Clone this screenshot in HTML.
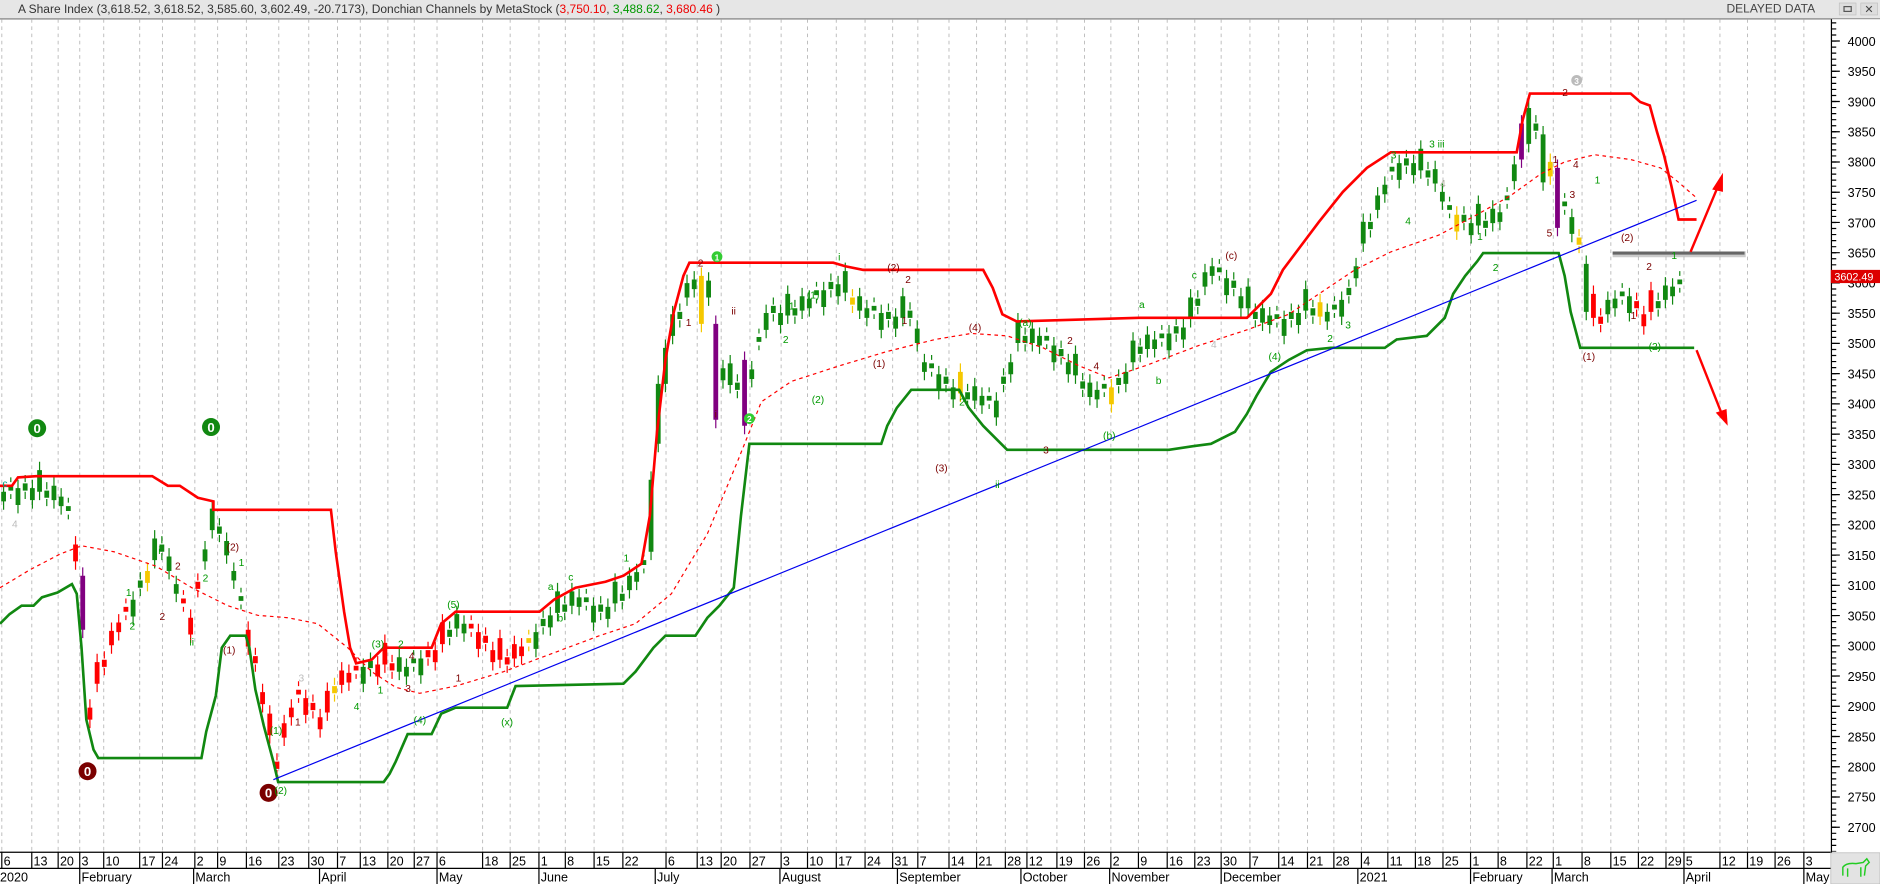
<!DOCTYPE html>
<html><head><meta charset="utf-8">
<style>
html,body{margin:0;padding:0;background:#fff;overflow:hidden}
svg{display:block}
text{font-family:"Liberation Sans",Arial,sans-serif}
</style></head>
<body>
<svg width="1880" height="884" viewBox="0 0 1568 737" preserveAspectRatio="none" xmlns="http://www.w3.org/2000/svg" xmlns:xlink="http://www.w3.org/1999/xlink">
<rect x="0" y="0" width="1568" height="737" fill="#fff"/>
<rect x="0" y="0" width="1568" height="15.5" fill="#e6e6e6"/>
<line x1="0" y1="15.8" x2="1568" y2="15.8" stroke="#777" stroke-width="1"/>
<text x="15" y="11" font-size="10" fill="#333">A Share Index (3,618.52, 3,618.52, 3,585.60, 3,602.49, -20.7173), Donchian Channels by MetaStock (<tspan fill="#e00">3,750.10</tspan>, <tspan fill="#090">3,488.62</tspan>, <tspan fill="#e00">3,680.46</tspan> )</text>
<text x="1440" y="10.5" font-size="10" fill="#444">DELAYED DATA</text>
<rect x="1534" y="2.5" width="14" height="10" fill="#ddd" stroke="#bbb" stroke-width="0.5"/>
<rect x="1538" y="5.5" width="6" height="4" fill="none" stroke="#555" stroke-width="1"/>
<rect x="1552" y="2.5" width="14" height="10" fill="#ddd" stroke="#bbb" stroke-width="0.5"/>
<text x="1555" y="11" font-size="9" fill="#444">✕</text>
<path fill="none" stroke="#bdbdbd" stroke-width="0.8" stroke-dasharray="3,3" d="M1.5 16V710M26.5 16V710M48.5 16V710M66.5 16V710M86.5 16V710M116.5 16V710M135.5 16V710M162.5 16V710M181.5 16V710M205.5 16V710M232.5 16V710M257.5 16V710M281.5 16V710M300.5 16V710M323.5 16V710M345.5 16V710M364.5 16V710M402.5 16V710M425.5 16V710M449.5 16V710M471.5 16V710M495.5 16V710M519.5 16V710M555.5 16V710M581.5 16V710M601.5 16V710M625.5 16V710M651.5 16V710M673.5 16V710M697.5 16V710M721.5 16V710M744.5 16V710M765.5 16V710M791.5 16V710M814.5 16V710M838.5 16V710M856.5 16V710M881.5 16V710M904.5 16V710M926.5 16V710M949.5 16V710M973.5 16V710M996.5 16V710M1018.5 16V710M1042.5 16V710M1066.5 16V710M1090.5 16V710M1112.5 16V710M1135.5 16V710M1157.5 16V710M1180.5 16V710M1203.5 16V710M1226.5 16V710M1249.5 16V710M1273.5 16V710M1295.5 16V710M1319.5 16V710M1343.5 16V710M1366.5 16V710M1389.5 16V710M1404.5 16V710M1434.5 16V710M1457.5 16V710M1480.5 16V710M1504.5 16V710"/>
<defs>
<path id="cg" d="M3 410v8M9 405v4M15 407v14M21 403v6M27 407v10M33 392v18M39 409v6M45 405v12M51 414v8M57 422v4M111 500v14M117 484v6M129 449v18M135 454v6M141 464v12M147 487v8M171 458v10M177 424v18M183 439v6M189 451v12M195 476v8M201 497v4M303 556v14M309 551v6M333 548v12M339 556v8M345 549v4M351 549v14M375 525v6M381 512v12M387 520v8M447 527v14M453 516v6M459 513v10M465 493v18M471 504v6M477 493v12M483 498v8M489 498v4M495 505v14M501 504v6M507 506v10M513 485v18M519 495v6M525 480v12M531 477v8M537 467v4M543 400v60M549 320v50M555 290v30M561 262v18M567 260v6M573 236v12M579 233v8M591 234v14M603 307v10M609 303v18M615 319v6M627 308v8M633 281v4M639 261v14M645 255v6M651 261v10M657 245v18M663 257v6M669 247v12M675 249v8M681 242v4M687 242v14M693 235v6M699 237v10M705 226v18M717 247v12M723 257v8M729 255v4M735 261v14M741 260v6M747 264v10M753 247v18M759 259v6M765 274v12M771 302v8M777 303v4M783 312v14M789 314v6M795 323v10M807 327v6M813 322v12M819 330v8M825 330v4M831 334v14M837 314v6M843 302v10M849 268v18M855 280v6M861 274v12M867 280v8M873 280v4M879 288v14M885 291v6M891 302v10M897 295v18M903 318v6M909 319v12M915 325v8M921 320v4M933 315v6M939 310v10M945 284v18M951 289v6M957 279v12M963 283v8M969 278v4M975 278v14M981 272v6M987 273v10M993 248v18M999 249v6M1005 227v12M1011 222v8M1017 223v4M1023 232v14M1029 234v6M1035 247v10M1041 239v18M1047 260v6M1053 257v12M1059 263v8M1065 262v4M1071 266v14M1077 260v6M1083 261v10M1089 241v18M1095 257v6M1107 260v8M1113 254v4M1119 250v14M1125 240v6M1131 222v10M1137 185v18M1143 185v6M1149 163v12M1155 154v8M1161 139v4M1167 136v14M1173 132v6M1179 136v10M1185 124v18M1191 142v6M1197 141v12M1203 160v8M1209 171v4M1221 179v6M1227 186v10M1233 170v18M1239 184v6M1245 174v12M1251 177v8M1257 163v4M1263 137v14M1275 90v30M1281 103v6M1287 112v40M1305 168v4M1311 181v14M1323 220v40M1341 250v12M1347 249v8M1353 243v4M1359 247v14M1383 251v6M1389 238v12M1395 239v8M1401 233v4"/>
<path id="cr" d="M63 454v14M75 590v10M81 552v18M87 550v6M93 526v12M99 519v8M105 506v4M153 499v4M159 515v14M165 485v6M207 525v14M213 547v6M219 577v10M225 595v18M231 635v6M237 603v12M243 590v8M249 575v4M255 582v14M261 586v6M267 598v10M273 576v18M285 559v12M291 561v8M297 555v4M315 554v10M321 536v18M327 553v6M357 542v6M363 542v10M369 519v18M393 520v4M399 527v14M405 530v6M411 542v10M417 532v18M423 548v6M429 537v12M435 539v8M1329 245v20M1335 264v6M1365 251v6M1371 262v10M1377 242v18"/>
<path id="cy" d="M123 476v10M279 572v6M441 532v4M585 230v40M711 248v6M801 310v18M927 323v14M1101 252v12M1215 179v14M1293 135v12M1317 198v6"/>
<path id="cp" d="M69 480v45M597 270v80M621 300v55M1269 103v30M1299 140v50"/>
</defs>
<g fill="none" stroke-width="1">
<g stroke="#118811"><use xlink:href="#cg" y="-7"/><use xlink:href="#cg" y="7"/></g>
<g stroke="#f00"><use xlink:href="#cr" y="-7"/><use xlink:href="#cr" y="7"/></g>
<g stroke="#f5c800"><use xlink:href="#cy" y="-7"/><use xlink:href="#cy" y="7"/></g>
<g stroke="#800080"><use xlink:href="#cp" y="-7"/><use xlink:href="#cp" y="7"/></g>
</g>
<g fill="none" stroke-width="4">
<use xlink:href="#cg" stroke="#118811"/>
<use xlink:href="#cr" stroke="#f00"/>
<use xlink:href="#cy" stroke="#f5c800"/>
<use xlink:href="#cp" stroke="#800080"/>
</g>
<polyline fill="none" stroke="#f00" stroke-width="2.2" points="0,405 10,405 15,398 30,397 45,397 127,397 140,405 150,405 165,415 178,418 178,425 276,425 280,460 287,510 292,540 297,553 310,550 320,540 360,540 368,520 380,510 450,510 462,500 480,490 505,485 520,480 535,470 542,430 548,360 555,300 562,260 570,230 575,219 695,219 705,222 720,225 820,225 828,240 836,262 848,268 950,265 1040,265 1060,245 1070,225 1085,205 1100,185 1120,160 1140,140 1160,127 1265,127 1270,100 1276,78 1360,78 1368,85 1376,88 1382,110 1388,130 1394,155 1400,183 1415,183"/>
<polyline fill="none" stroke="#118811" stroke-width="2.2" points="0,520 8,512 18,505 28,505 35,498 48,494 60,487 64,495 68,540 72,600 78,625 82,632 168,632 172,610 180,580 185,540 192,530 205,530 208,540 213,575 220,605 228,635 232,652 320,652 325,645 330,635 340,612 360,612 368,595 380,590 423,590 430,572 520,570 530,560 545,540 555,530 580,530 590,515 600,505 612,490 618,430 625,370 735,370 740,355 748,340 760,325 800,325 808,340 820,355 835,370 840,375 975,375 995,372 1010,370 1030,360 1040,345 1048,330 1060,310 1075,300 1090,292 1110,290 1155,290 1165,283 1190,280 1205,265 1212,245 1222,230 1232,218 1237,211 1300,211 1305,230 1310,260 1318,290 1413,290"/>
<polyline fill="none" stroke="#f00" stroke-width="1" stroke-dasharray="3,3" points="0,490 25,475 50,462 68,455 95,460 130,472 160,490 190,505 215,513 240,515 265,520 290,540 310,560 330,573 350,578 380,572 420,560 460,545 500,530 530,520 560,495 590,445 615,385 635,335 660,318 700,305 740,293 780,283 810,278 840,280 870,290 900,305 925,315 955,305 1000,288 1040,275 1075,262 1100,245 1130,225 1160,210 1200,196 1230,180 1260,163 1285,145 1305,135 1330,129 1360,133 1385,140 1400,152 1415,165"/>
<line x1="228" y1="650" x2="1415" y2="167" stroke="#0000ee" stroke-width="1"/>
<line x1="1345" y1="212" x2="1456" y2="212" stroke="#aaa" stroke-width="5" opacity="0.6"/>
<line x1="1345" y1="211" x2="1455" y2="211" stroke="#666" stroke-width="2.5"/>
<g stroke="#f00" stroke-width="2" fill="#f00">
<line x1="1410" y1="210" x2="1433" y2="155"/>
<polygon points="1437,144 1428,158 1437,160" stroke="none"/>
<line x1="1415" y1="292" x2="1436" y2="345"/>
<polygon points="1441,355 1431,344 1440,341" stroke="none"/>
</g>
<g font-size="11" font-weight="bold" text-anchor="middle" fill="#fff">
<circle cx="31" cy="357" r="7.5" fill="#118811"/><text x="31" y="361">0</text>
<circle cx="176" cy="356" r="7.5" fill="#118811"/><text x="176" y="360">0</text>
<circle cx="73" cy="643" r="7.5" fill="#7a0000"/><text x="73" y="647">0</text>
<circle cx="224" cy="661" r="7.5" fill="#7a0000"/><text x="224" y="665">0</text>
<circle cx="598" cy="214" r="4.5" fill="#3c3"/><text x="598" y="217" font-size="7">1</text>
<circle cx="625" cy="349" r="4.5" fill="#3c3"/><text x="625" y="352" font-size="7">2</text>
<circle cx="1315" cy="67" r="4.5" fill="#bbb"/><text x="1315" y="70" font-size="7">3</text>
</g>
<g font-size="8.5">
<text x="2" y="406" fill="#0a8">c</text><text x="10" y="440" fill="#bbb">4</text>
<text x="133" y="517" fill="#7a0000">2</text><text x="158" y="538" fill="#090">ii</text>
<text x="132" y="462" fill="#090">i</text><text x="146" y="475" fill="#7a0000">2</text>
<text x="105" y="497" fill="#090">1</text><text x="108" y="525" fill="#090">2</text>
<text x="186" y="545" fill="#7a0000">(1)</text><text x="189" y="459" fill="#7a0000">(2)</text>
<text x="169" y="485" fill="#090">2</text><text x="199" y="472" fill="#090">1</text>
<text x="225" y="612" fill="#090">(1)</text><text x="229" y="662" fill="#090">(2)</text>
<text x="249" y="568" fill="#bbb">3</text><text x="246" y="605" fill="#7a0000">1</text>
<text x="310" y="540" fill="#090">(3)</text><text x="315" y="578" fill="#090">1</text>
<text x="332" y="540" fill="#090">2</text><text x="341" y="550" fill="#7a0000">4</text>
<text x="338" y="577" fill="#7a0000">3</text><text x="345" y="603" fill="#090">(4)</text>
<text x="373" y="507" fill="#090">(5)</text><text x="380" y="568" fill="#7a0000">1</text>
<text x="418" y="605" fill="#090">(x)</text><text x="295" y="592" fill="#090">4</text>
<text x="457" y="492" fill="#090">a</text><text x="465" y="518" fill="#090">b</text>
<text x="474" y="484" fill="#090">c</text><text x="520" y="468" fill="#090">1</text>
<text x="582" y="222" fill="#7a0000">2</text><text x="572" y="272" fill="#7a0000">1</text>
<text x="610" y="262" fill="#7a0000">ii</text><text x="596" y="348" fill="#7a0000">i</text>
<text x="653" y="286" fill="#090">2</text><text x="658" y="258" fill="#090">1</text>
<text x="673" y="249" fill="#090">(1)</text><text x="677" y="336" fill="#090">(2)</text>
<text x="699" y="217" fill="#090">i</text><text x="740" y="226" fill="#7a0000">(2)</text>
<text x="755" y="236" fill="#7a0000">2</text><text x="728" y="306" fill="#7a0000">(1)</text>
<text x="752" y="270" fill="#7a0000">1</text><text x="808" y="276" fill="#7a0000">(4)</text>
<text x="780" y="393" fill="#7a0000">(3)</text><text x="800" y="338" fill="#090">2</text>
<text x="830" y="407" fill="#090">ii</text><text x="850" y="272" fill="#090">(a)</text>
<text x="890" y="287" fill="#7a0000">2</text><text x="870" y="378" fill="#7a0000">3</text>
<text x="912" y="308" fill="#7a0000">4</text><text x="920" y="366" fill="#090">(b)</text>
<text x="950" y="257" fill="#090">a</text><text x="964" y="320" fill="#090">b</text>
<text x="994" y="232" fill="#090">c</text><text x="1022" y="216" fill="#7a0000">(c)</text>
<text x="1010" y="290" fill="#bbb">4</text><text x="1058" y="300" fill="#090">(4)</text>
<text x="1087" y="258" fill="#090">1</text><text x="1107" y="285" fill="#090">2</text>
<text x="1122" y="274" fill="#090">3</text><text x="1160" y="132" fill="#090">3</text>
<text x="1172" y="187" fill="#090">4</text><text x="1192" y="123" fill="#090">3 iii</text>
<text x="1201" y="156" fill="#aa9">4</text><text x="1232" y="200" fill="#090">1</text>
<text x="1245" y="226" fill="#090">2</text><text x="1295" y="136" fill="#7a0000">1</text>
<text x="1309" y="165" fill="#7a0000">3</text><text x="1312" y="140" fill="#7a0000">4</text>
<text x="1303" y="80" fill="#7a0000">2</text><text x="1290" y="197" fill="#7a0000">5</text>
<text x="1330" y="153" fill="#090">1</text><text x="1352" y="201" fill="#7a0000">(2)</text>
<text x="1320" y="300" fill="#7a0000">(1)</text><text x="1375" y="292" fill="#090">(2)</text>
<text x="1360" y="266" fill="#7a0000">1</text><text x="1373" y="225" fill="#7a0000">2</text>
<text x="1394" y="216" fill="#090">1</text>
</g>
<rect x="1528" y="16" width="40" height="695" fill="#fff"/>
<line x1="1527.5" y1="16" x2="1527.5" y2="712" stroke="#000" stroke-width="1"/>
<line x1="1529.5" y1="18.6" x2="1529.5" y2="710" stroke="#000" stroke-width="4" stroke-dasharray="1 4.042"/>
<line x1="1531" y1="33.7" x2="1531" y2="700" stroke="#000" stroke-width="7" stroke-dasharray="1 24.21"/>
<g font-size="10.5" fill="#000">
<text x="1541" y="38.2">4000</text><text x="1541" y="63.4">3950</text><text x="1541" y="88.6">3900</text><text x="1541" y="113.8">3850</text><text x="1541" y="139">3800</text><text x="1541" y="164.3">3750</text><text x="1541" y="189.5">3700</text><text x="1541" y="214.7">3650</text><text x="1541" y="239.9">3600</text><text x="1541" y="265.1">3550</text><text x="1541" y="290.3">3500</text><text x="1541" y="315.5">3450</text><text x="1541" y="340.7">3400</text><text x="1541" y="365.9">3350</text><text x="1541" y="391.1">3300</text><text x="1541" y="416.3">3250</text><text x="1541" y="441.6">3200</text><text x="1541" y="466.8">3150</text><text x="1541" y="492">3100</text><text x="1541" y="517.2">3050</text><text x="1541" y="542.4">3000</text><text x="1541" y="567.6">2950</text><text x="1541" y="592.8">2900</text><text x="1541" y="618">2850</text><text x="1541" y="643.2">2800</text><text x="1541" y="668.4">2750</text><text x="1541" y="693.7">2700</text>
</g>
<rect x="1527" y="225" width="41" height="11" fill="#d00"/>
<text x="1530" y="234" font-size="9" fill="#fff">3602.49</text>
<rect x="0" y="710" width="1527" height="27" fill="#fff"/>
<line x1="0" y1="710.5" x2="1527" y2="710.5" stroke="#000"/>
<line x1="0" y1="724" x2="1527" y2="724" stroke="#000"/>
<path stroke="#000" stroke-width="1" d="M1.5 710V724M26.5 710V724M48.5 710V724M66.5 710V724M86.5 710V724M116.5 710V724M135.5 710V724M162.5 710V724M181.5 710V724M205.5 710V724M232.5 710V724M257.5 710V724M281.5 710V724M300.5 710V724M323.5 710V724M345.5 710V724M364.5 710V724M402.5 710V724M425.5 710V724M449.5 710V724M471.5 710V724M495.5 710V724M519.5 710V724M555.5 710V724M581.5 710V724M601.5 710V724M625.5 710V724M651.5 710V724M673.5 710V724M697.5 710V724M721.5 710V724M744.5 710V724M765.5 710V724M791.5 710V724M814.5 710V724M838.5 710V724M856.5 710V724M881.5 710V724M904.5 710V724M926.5 710V724M949.5 710V724M973.5 710V724M996.5 710V724M1018.5 710V724M1042.5 710V724M1066.5 710V724M1090.5 710V724M1112.5 710V724M1135.5 710V724M1157.5 710V724M1180.5 710V724M1203.5 710V724M1226.5 710V724M1249.5 710V724M1273.5 710V724M1295.5 710V724M1319.5 710V724M1343.5 710V724M1366.5 710V724M1389.5 710V724M1404.5 710V724M1434.5 710V724M1457.5 710V724M1480.5 710V724M1504.5 710V724M66.5 724V737M161.5 724V737M266.5 724V737M364.5 724V737M449.5 724V737M546.5 724V737M650.5 724V737M748.5 724V737M851.5 724V737M925.5 724V737M1018.5 724V737M1132.5 724V737M1226.5 724V737M1294.5 724V737M1404.5 724V737M1504.5 724V737"/>
<g font-size="10.5" fill="#000">
<text x="3" y="721.5">6</text><text x="28" y="721.5">13</text><text x="50" y="721.5">20</text><text x="68" y="721.5">3</text><text x="88" y="721.5">10</text><text x="118" y="721.5">17</text><text x="137" y="721.5">24</text><text x="164" y="721.5">2</text><text x="183" y="721.5">9</text><text x="207" y="721.5">16</text><text x="234" y="721.5">23</text><text x="259" y="721.5">30</text><text x="283" y="721.5">7</text><text x="302" y="721.5">13</text><text x="325" y="721.5">20</text><text x="347" y="721.5">27</text><text x="366" y="721.5">6</text><text x="404" y="721.5">18</text><text x="427" y="721.5">25</text><text x="451" y="721.5">1</text><text x="473" y="721.5">8</text><text x="497" y="721.5">15</text><text x="521" y="721.5">22</text><text x="557" y="721.5">6</text><text x="583" y="721.5">13</text><text x="603" y="721.5">20</text><text x="627" y="721.5">27</text><text x="653" y="721.5">3</text><text x="675" y="721.5">10</text><text x="699" y="721.5">17</text><text x="723" y="721.5">24</text><text x="746" y="721.5">31</text><text x="767" y="721.5">7</text><text x="793" y="721.5">14</text><text x="816" y="721.5">21</text><text x="840" y="721.5">28</text><text x="858" y="721.5">12</text><text x="883" y="721.5">19</text><text x="906" y="721.5">26</text><text x="928" y="721.5">2</text><text x="951" y="721.5">9</text><text x="975" y="721.5">16</text><text x="998" y="721.5">23</text><text x="1020" y="721.5">30</text><text x="1044" y="721.5">7</text><text x="1068" y="721.5">14</text><text x="1092" y="721.5">21</text><text x="1114" y="721.5">28</text><text x="1137" y="721.5">4</text><text x="1159" y="721.5">11</text><text x="1182" y="721.5">18</text><text x="1205" y="721.5">25</text><text x="1228" y="721.5">1</text><text x="1251" y="721.5">8</text><text x="1275" y="721.5">22</text><text x="1297" y="721.5">1</text><text x="1321" y="721.5">8</text><text x="1345" y="721.5">15</text><text x="1368" y="721.5">22</text><text x="1391" y="721.5">29</text><text x="1406" y="721.5">5</text><text x="1436" y="721.5">12</text><text x="1459" y="721.5">19</text><text x="1482" y="721.5">26</text><text x="1506" y="721.5">3</text>
<text x="0" y="735">2020</text><text x="68" y="735">February</text><text x="163" y="735">March</text><text x="268" y="735">April</text><text x="366" y="735">May</text><text x="451" y="735">June</text><text x="548" y="735">July</text><text x="652" y="735">August</text><text x="750" y="735">September</text><text x="853" y="735">October</text><text x="927" y="735">November</text><text x="1020" y="735">December</text><text x="1134" y="735">2021</text><text x="1228" y="735">February</text><text x="1296" y="735">March</text><text x="1406" y="735">April</text><text x="1506" y="735">May</text>
</g>
<rect x="1527" y="711" width="41" height="26" fill="#e3e3e3" stroke="#aaa" stroke-width="0.5"/>
<path d="M1537,730 L1537,723 Q1540,719 1548,720 L1554,719 L1557,716 L1559,719 L1556,722 L1555,730 M1541,724 L1541,731 M1552,723 L1552,731" fill="none" stroke="#2c2" stroke-width="1.2"/>
</svg>
</body></html>
